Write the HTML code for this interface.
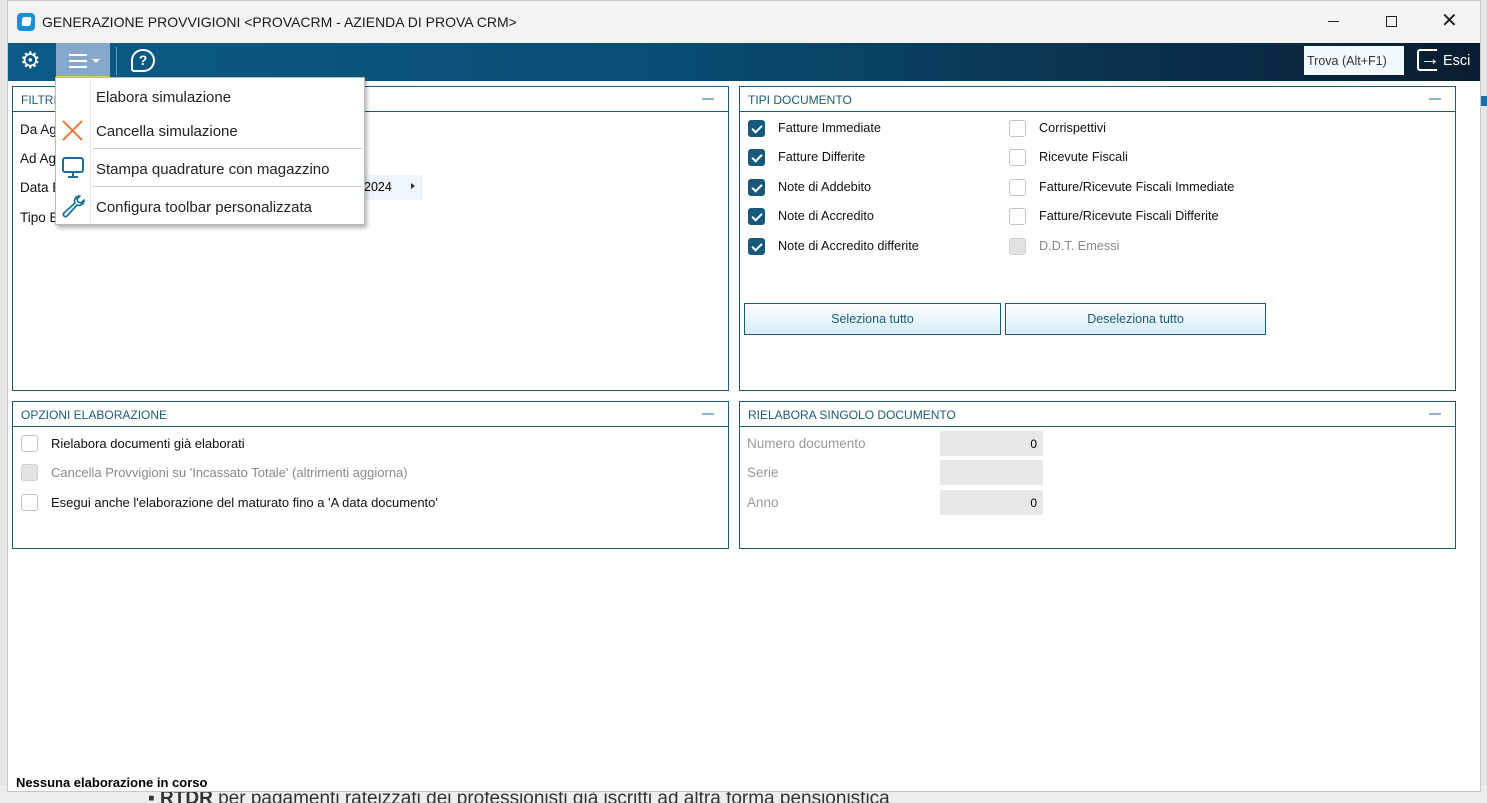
<!DOCTYPE html>
<html style="width:1487px;height:803px;overflow:hidden"><head><meta charset="utf-8"><style>
*{box-sizing:border-box;margin:0;padding:0}
body{width:1487px;height:803px;overflow:hidden;background:#e6e6e6;font-family:"Liberation Sans",sans-serif;position:relative}
.a{position:absolute}
.win{left:7px;top:0;width:1474px;height:792px;background:#fff;border:1px solid #c8c8c8}
.panel{position:absolute;border:1px solid #1d5a7a;background:#fff}
.ph{height:25px;border-bottom:1px solid #1d5a7a;color:#1d5a7a;font-size:12px;padding:6px 8px;position:relative}
.ph .m{position:absolute;right:14px;top:11px;width:12px;height:2px;background:#8fb4c8}
.cb{position:absolute;width:17px;height:17px;border:1px solid #c4c4c4;border-radius:3px;background:#fff}
.cb.on{background:#17597a;border-color:#17597a}
.cb.on:after{content:"";position:absolute;left:5px;top:2px;width:4px;height:8px;border:solid #fff;border-width:0 2px 2px 0;transform:rotate(45deg)}
.cb.dis{background:#e2e2e2;border-color:#d0d0d0}
.lbl{position:absolute;font-size:12.7px;color:#111}
.btn{position:absolute;height:32px;border:1px solid #1d5a7a;background:linear-gradient(#fff,#d5ecf8);color:#1d5a7a;font-size:12.5px;text-align:center;line-height:30px}
.fld{position:absolute;background:#e8e8e8;width:103px;height:25px;font-size:12px;text-align:right;padding:6px 6px}
.mi{position:absolute;left:96px;font-size:15px;color:#222}
</style></head><body>
<div class="a" style="left:0;top:785px;width:1487px;height:18px;background:#eee"></div>
<div class="a" style="left:148px;top:788px;font-size:19px;color:#333;white-space:nowrap">▪ <b>RTDR</b> per pagamenti rateizzati dei professionisti già iscritti ad altra forma pensionistica</div>
<div class="a" style="left:1481px;top:96px;width:6px;height:10px;background:#1d6fa8"></div>
<div class="a win">
</div>
<!-- title bar -->
<div class="a" style="left:8px;top:1px;width:1472px;height:42px;background:#f3f3f3"></div>
<div class="a" style="left:17px;top:13px;width:18px;height:18px;background:#1a8fd6;border-radius:4px"></div>
<div class="a" style="left:22px;top:17px;width:9px;height:9px;background:#fff;border-radius:2px;transform:skew(-8deg)"></div>
<div class="a" style="left:42px;top:14px;font-size:14px;color:#1a1a1a">GENERAZIONE PROVVIGIONI &lt;PROVACRM - AZIENDA DI PROVA CRM&gt;</div>
<div class="a" style="left:1328px;top:21px;width:11px;height:1px;background:#222"></div>
<div class="a" style="left:1386px;top:16px;width:11px;height:11px;border:1px solid #222"></div>
<div class="a" style="left:1441px;top:8px;font-size:20px;color:#222;font-weight:300">✕</div>
<!-- toolbar -->
<div class="a" style="left:8px;top:43px;width:1472px;height:38px;background:linear-gradient(90deg,#0b5b86 0%,#094d73 45%,#0a1c30 100%)"></div>
<div class="a" style="left:20px;top:47px;color:#fff;font-size:23px">⚙</div>
<div class="a" style="left:56px;top:43px;width:54px;height:35px;background:#86a9cb"></div>
<div class="a" style="left:56px;top:76px;width:54px;height:2px;background:#e8c36a"></div>
<div class="a" style="left:69px;top:54px;width:18px;height:2px;background:#fff;box-shadow:0 6px #fff,0 12px #fff"></div>
<div class="a" style="left:92px;top:59px;border:4px solid transparent;border-top-color:#fff"></div>
<div class="a" style="left:116px;top:47px;width:1px;height:28px;background:#6f93b0"></div>
<div class="a" style="left:131px;top:49px;width:24px;height:23px;border:2px solid #fff;border-radius:12px 12px 12px 3px;color:#fff;font-size:14px;font-weight:bold;text-align:center;line-height:19px">?</div>
<div class="a" style="left:1304px;top:46px;width:100px;height:29px;background:#f2f9ff;font-size:12.5px;color:#333;padding:8px 3px">Trova (Alt+F1)</div>
<div class="a" style="left:1417px;top:49px;width:20px;height:22px;border:2px solid #fff;border-right:none;border-radius:3px 0 0 3px"></div>
<div class="a" style="left:1420px;top:48px;color:#fff;font-size:20px">→</div>
<div class="a" style="left:1443px;top:53px;color:#fff;font-size:14.5px">Esci</div>
<!-- FILTRI panel -->
<div class="panel" style="left:12px;top:86px;width:717px;height:305px"><div class="ph">FILTRI<div class="m"></div></div></div>
<div class="lbl" style="left:20px;top:122px;font-size:13.5px">Da Agente</div>
<div class="lbl" style="left:20px;top:151px;font-size:13.5px">Ad Agente</div>
<div class="lbl" style="left:20px;top:180px;font-size:13.5px">Data Elaborazione</div>
<div class="lbl" style="left:20px;top:210px;font-size:13.5px">Tipo Elaborazione</div>
<div class="a" style="left:210px;top:175px;width:213px;height:25px;background:#eef6fc"></div>
<div class="a" style="left:364px;top:180px;font-size:12.5px">2024</div>
<div class="a" style="left:411px;top:183px;border:3px solid transparent;border-left:4px solid #333"></div>
<!-- menu -->
<div class="a" style="left:55px;top:77px;width:310px;height:148px;background:#fff;border:1px solid #bbb;box-shadow:2px 3px 4px rgba(0,0,0,.3)"></div>
<div class="a" style="left:90px;top:79px;width:1px;height:144px;background:#e4e4e4"></div>
<div class="a" style="left:93px;top:148px;width:269px;height:1px;background:#ccc"></div>
<div class="a" style="left:93px;top:186px;width:269px;height:1px;background:#ccc"></div>
<div class="mi" style="top:89px">Elabora simulazione</div>
<div class="mi" style="top:123px">Cancella simulazione</div>
<div class="mi" style="top:161px">Stampa quadrature con magazzino</div>
<div class="mi" style="top:199px">Configura toolbar personalizzata</div>
<svg class="a" style="left:60px;top:118px" width="26" height="26"><path d="M3 3L22 22M22 3L3 22" stroke="#f07a3a" stroke-width="2"/></svg>
<svg class="a" style="left:60px;top:155px" width="26" height="26"><rect x="3" y="3" width="20" height="14" rx="2" fill="none" stroke="#1a6f9a" stroke-width="2"/><path d="M13 17v4M8 22h10" stroke="#1a6f9a" stroke-width="2"/></svg>
<svg class="a" style="left:60px;top:193px" width="26" height="26"><path d="M20 3a5 5 0 0 0-5 7L4 20a2 2 0 0 0 3 3L17 12a5 5 0 0 0 7-5l-3 3-3-1-1-3z" fill="none" stroke="#1a6f9a" stroke-width="1.7" stroke-linejoin="round"/></svg>
<!-- TIPI DOCUMENTO -->
<div class="panel" style="left:739px;top:86px;width:717px;height:305px"><div class="ph">TIPI DOCUMENTO<div class="m"></div></div></div>
<div class="cb on" style="left:748px;top:120px"></div><div class="lbl" style="left:778px;top:121px">Fatture Immediate</div>
<div class="cb on" style="left:748px;top:149px"></div><div class="lbl" style="left:778px;top:150px">Fatture Differite</div>
<div class="cb on" style="left:748px;top:179px"></div><div class="lbl" style="left:778px;top:180px">Note di Addebito</div>
<div class="cb on" style="left:748px;top:208px"></div><div class="lbl" style="left:778px;top:209px">Note di Accredito</div>
<div class="cb on" style="left:748px;top:238px"></div><div class="lbl" style="left:778px;top:239px">Note di Accredito differite</div>
<div class="cb" style="left:1009px;top:120px"></div><div class="lbl" style="left:1039px;top:121px">Corrispettivi</div>
<div class="cb" style="left:1009px;top:149px"></div><div class="lbl" style="left:1039px;top:150px">Ricevute Fiscali</div>
<div class="cb" style="left:1009px;top:179px"></div><div class="lbl" style="left:1039px;top:180px">Fatture/Ricevute Fiscali Immediate</div>
<div class="cb" style="left:1009px;top:208px"></div><div class="lbl" style="left:1039px;top:209px">Fatture/Ricevute Fiscali Differite</div>
<div class="cb dis" style="left:1009px;top:238px"></div><div class="lbl" style="left:1039px;top:239px;color:#888">D.D.T. Emessi</div>
<div class="btn" style="left:744px;top:303px;width:257px">Seleziona tutto</div>
<div class="btn" style="left:1005px;top:303px;width:261px">Deseleziona tutto</div>
<!-- OPZIONI -->
<div class="panel" style="left:12px;top:401px;width:717px;height:148px"><div class="ph">OPZIONI ELABORAZIONE<div class="m"></div></div></div>
<div class="cb" style="left:21px;top:435px"></div><div class="lbl" style="left:51px;top:436px;font-size:13px">Rielabora documenti già elaborati</div>
<div class="cb dis" style="left:21px;top:464px"></div><div class="lbl" style="left:51px;top:465px;color:#888;font-size:13px">Cancella Provvigioni su 'Incassato Totale' (altrimenti aggiorna)</div>
<div class="cb" style="left:21px;top:494px"></div><div class="lbl" style="left:51px;top:495px;font-size:13px">Esegui anche l'elaborazione del maturato fino a 'A data documento'</div>
<!-- RIELABORA -->
<div class="panel" style="left:739px;top:401px;width:717px;height:148px"><div class="ph">RIELABORA SINGOLO DOCUMENTO<div class="m"></div></div></div>
<div class="lbl" style="left:747px;top:436px;color:#999;font-size:13.5px">Numero documento</div>
<div class="lbl" style="left:747px;top:465px;color:#999;font-size:13.5px">Serie</div>
<div class="lbl" style="left:747px;top:495px;color:#999;font-size:13.5px">Anno</div>
<div class="fld" style="left:940px;top:431px">0</div>
<div class="fld" style="left:940px;top:460px"></div>
<div class="fld" style="left:940px;top:490px">0</div>
<div class="a" style="left:16px;top:775px;font-size:13px;font-weight:bold;color:#000">Nessuna elaborazione in corso</div>
</body></html>
